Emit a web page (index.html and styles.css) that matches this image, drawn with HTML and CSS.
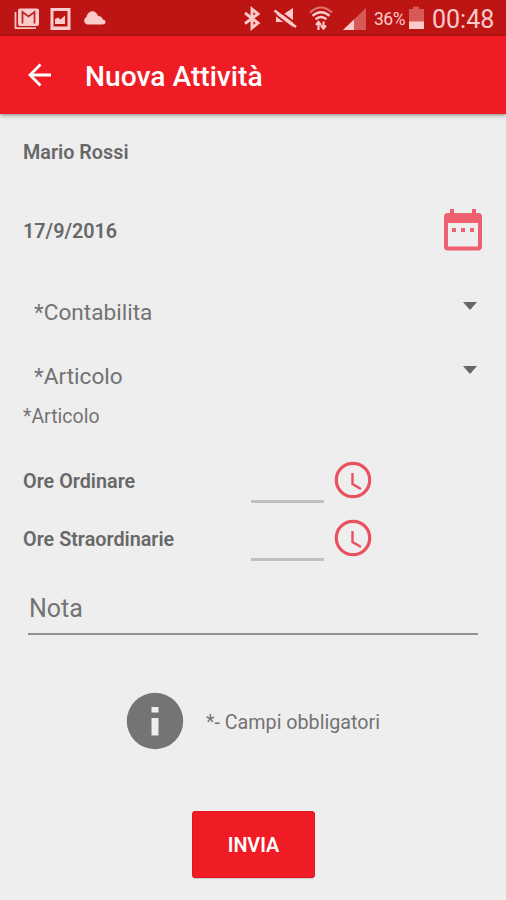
FILE: index.html
```html
<!DOCTYPE html>
<html lang="it">
<head>
<meta charset="utf-8">
<title>Nuova Attività</title>
<link rel="stylesheet" href="styles.css">
</head>
<body>
<header class="status">
  <svg class="notifications" width="110" height="36" viewBox="0 0 110 36">
    <path d="M15.500 12v16.200h20.500" fill="none" stroke="#f6c3c0" stroke-width="1.800"/>
    <rect x="18" y="8.500" width="21" height="17.500" rx="2" fill="#fbcaca"/>
    <path d="M22.500 23.500V12l6 4.500 6-4.500v11.500" fill="none" stroke="#b92322" stroke-width="1.700"/>
    <path d="M50.500 8h20v22h-20zM53.500 11v15.500h14V11z" fill="#fbcaca" fill-rule="evenodd"/>
    <path d="M55 24v-5l3-1.500 2.500 2 4.500-4V24z" fill="#fbcaca"/>
    <path d="M87 24.500a4 4 0 0 1-.5-7.500c.7-4 4.500-6.800 8-5.200 2 .8 3 2.800 3.500 4.200 3 .2 4 1.600 5 3.500 3.500.8 3.500 5-.5 5z" fill="#fbcaca"/>
  </svg>
  <div class="system">
    <svg width="157" height="36" viewBox="235 0 157 36">
      <path d="M245 13l13 10-6 5V9l6 5-13 9.500" fill="none" stroke="#fbcaca" stroke-width="2.900"/>
      <path d="M276 14.500h7l10-6.500v19l-10-5h-7z" fill="#fbcaca"/>
      <path d="M276 8.500l21 16" stroke="#bd1514" stroke-width="2.200"/>
      <path d="M274.500 10.500l21.500 16.500" stroke="#fbcaca" stroke-width="2.600"/>
      <path d="M273 13l21 16" stroke="#bd1514" stroke-width="1.600"/>
      <path d="M310 12.500q11-10 22 0" fill="none" stroke="#de7470" stroke-width="2"/>
      <path d="M312.500 15.800q8.500-7 17 0M315.500 19.300q5.500-4.500 11 0" fill="none" stroke="#fbcaca" stroke-width="2.400"/>
      <path d="M318.500 30v-7.500M323.500 21.500v7.500M316 25l2.500-3 2.500 3M321 25.500l2.500 3 2.500-3" fill="none" stroke="#fbcaca" stroke-width="2.100"/>
      <path d="M343 30L366 8v22z" fill="#d65a55"/>
      <path d="M343 30l11-10.500V30z" fill="#fbcaca"/>
    </svg>
    <span class="percent">36%</span>
    <svg class="battery" width="15" height="36" viewBox="0 0 15 36">
      <path d="M0 9h4V6.500h6V9h5v20H0z" fill="#d65a55"/>
      <path d="M0 21.500h15V29H0z" fill="#fbcaca"/>
    </svg>
    <time class="clock">00:48</time>
  </div>
</header>
<nav class="appbar">
  <svg width="24" height="24" viewBox="0 0 24 24"><path d="M12.500 1.500L2 12l10.500 10.500M2 12h21" fill="none" stroke="#fff" stroke-width="2.800"/></svg>
  <h1 class="title">Nuova Attività</h1>
</nav>
<main class="form">
  <div class="row name"><span class="strong user">Mario Rossi</span></div>
  <div class="row date">
    <span class="strong day">17/9/2016</span>
    <svg width="40" height="44" viewBox="0 0 40 44">
      <path fill="#ee5f70" fill-rule="evenodd" d="M7 1h4v4h18V1h4v4h2.500q3.500 0 3.500 3.500v30q0 4-4 4H5q-4 0-4-4v-30Q1 5 4.500 5H7zM5 15v23.500h30V15z"/>
      <path fill="#ee5f70" d="M9 20h4v4H9zM18 20h4v4h-4zM27 20h4v4h-4z"/>
    </svg>
  </div>
  <div class="row select"><span>*Contabilita</span><i class="caret"></i></div>
  <div class="row select"><span>*Articolo</span><i class="caret"></i></div>
  <div class="hint">*Articolo</div>
  <div class="row hours">
    <label class="strong">Ore Ordinare</label>
    <div class="field"></div>
    <svg width="38" height="38" viewBox="0 0 38 38" fill="none" stroke="#e9515f"><circle cx="19" cy="19" r="16.700" stroke-width="3.200"/><path d="M18.500 12v11l8.500 5" stroke-width="2.400"/></svg>
  </div>
  <div class="row hours">
    <label class="strong">Ore Straordinarie</label>
    <div class="field"></div>
    <svg width="38" height="38" viewBox="0 0 38 38" fill="none" stroke="#e9515f"><circle cx="19" cy="19" r="16.700" stroke-width="3.200"/><path d="M18.500 12v11l8.500 5" stroke-width="2.400"/></svg>
  </div>
  <div class="note">Nota</div>
  <div class="info">
    <svg width="58" height="58" viewBox="0 0 58 58"><circle cx="29" cy="29" r="28.200" fill="#747474"/><path fill="#eee" d="M25.500 15h7v5.500h-7zM25.500 26h7v17.500h-7z"/></svg>
    <span class="required">*- Campi obbligatori</span>
  </div>
  <button class="send" type="button">INVIA</button>
</main>
</body>
</html>
```
FILE: styles.css
```css
* { box-sizing: border-box; }
body {
  margin: 0;
  height: 900px;
  overflow: hidden;
  background: #eee;
  color: #737373;
  font-family: Roboto, sans-serif;
}
svg { display: block; flex: none; }
span, time, label { white-space: nowrap; }
.status {
  height: 36px;
  display: flex;
  justify-content: space-between;
  background: #bd1514;
  color: #fbcaca;
}
.system { display: flex; width: 271px; }
.system > svg:first-child { margin-right: -18px; }
.percent { width: 35px; font-size: 17.500px; line-height: 39px; letter-spacing: -.5px; }
.clock { margin-left: 8px; font-size: 25px; line-height: 39px; }
.appbar {
  height: 78px;
  display: flex;
  align-items: center;
  gap: 33px;
  padding-left: 28px;
  background: #ef1c25;
  box-shadow: 0 1px 4px rgba(0, 0, 0, .45);
}
.title { margin: 2px 0 0; color: #fff; font-size: 28.200px; font-weight: 500; }
.row { display: flex; align-items: center; }
.strong { font-size: 19.800px; font-weight: 600; color: #686868; }
.name { height: 75px; padding: 2px 0 0 23px; }
.date { height: 82px; padding: 0 23px; justify-content: space-between; }
.day { margin-top: 2px; }
.date svg { margin-top: -1px; }
.select {
  height: 64px;
  padding: 0 29px 0 34px;
  justify-content: space-between;
  font-size: 22.600px;
}
.date + .select { margin-top: 9px; }
.caret {
  margin-top: -13px;
  border: 7px solid transparent;
  border-top: 8px solid #666;
  border-bottom: 0;
}
.hint { height: 16px; padding-left: 23px; font-size: 19.500px; line-height: 18px; }
.hours { height: 58px; padding-left: 23px; }
.hint + .hours { margin-top: 28px; }
.hours label { width: 228px; }
.field { width: 73px; height: 44px; margin-right: 10px; border-bottom: 3px solid #c0c0c0; }
.hours svg { margin-top: -2px; }
.note {
  height: 52px;
  margin: 15px 28px 0;
  padding-left: 1px;
  border-bottom: 2px solid #919191;
  font-size: 25px;
  line-height: 52px;
}
.info { display: flex; align-items: center; gap: 22px; margin: 57px 0 0 126px; }
.required { margin-top: 2px; font-size: 19.700px; }
.send {
  display: block;
  width: 123px;
  height: 67px;
  margin: 61px auto 0 192px;
  padding: 2px 0 0;
  border: 0;
  border-radius: 4px;
  background: #ef1c25;
  box-shadow: inset 0 0 0 1px #df1720, 0 1px 1px rgba(0, 0, 0, .15);
  color: #fff;
  font: 600 19.800px Roboto, sans-serif;
}
```
